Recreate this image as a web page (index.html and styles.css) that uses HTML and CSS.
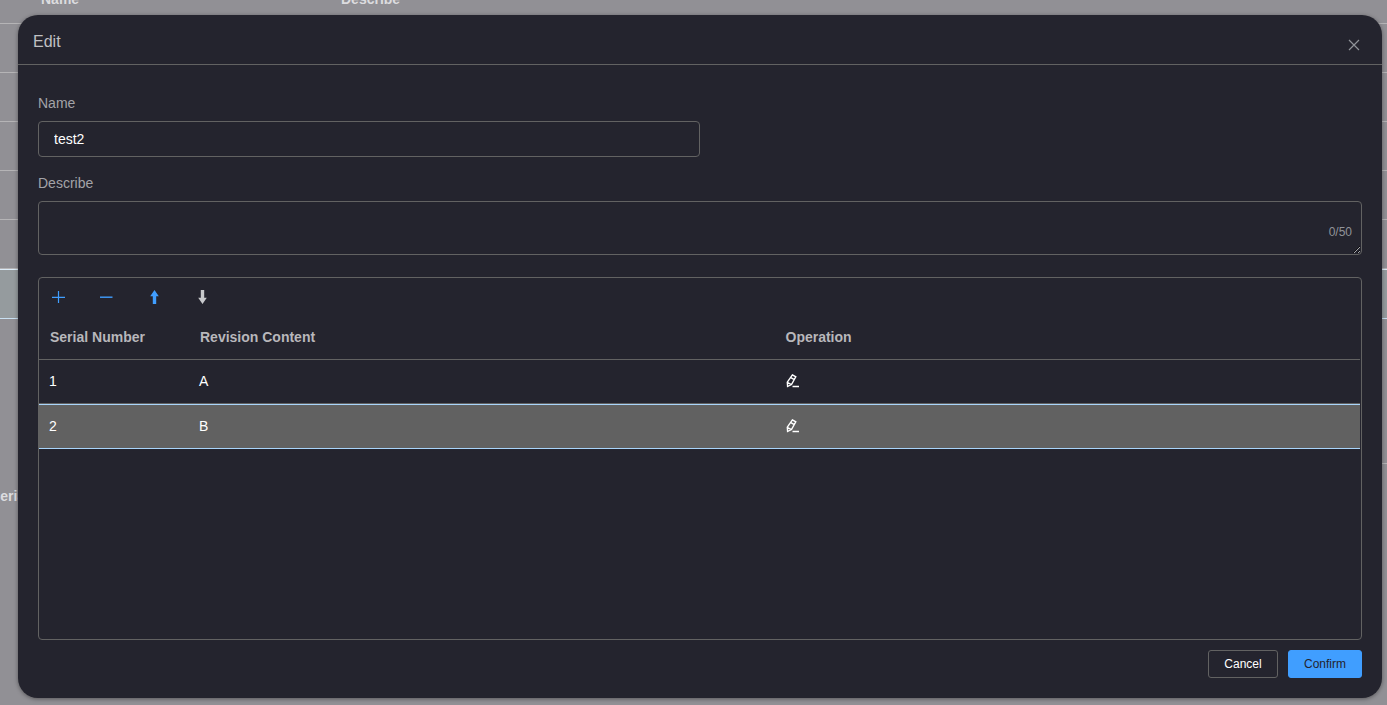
FILE: index.html
```html
<!DOCTYPE html>
<html lang="en">
<head>
<meta charset="utf-8">
<meta name="viewport" content="width=device-width, initial-scale=1">
<title>Edit</title>
<link rel="stylesheet" href="styles.css">
</head>
<body>
<div class="stage">
  <div class="page" aria-hidden="true">
    <div class="list">
      <div class="list-row list-head"><span>Name</span><span>Describe</span></div>
      <div class="list-row"></div>
      <div class="list-row"></div>
      <div class="list-row"></div>
      <div class="list-row"></div>
      <div class="list-row"></div>
      <div class="list-row list-row-active"></div>
    </div>
    <div class="detail"><span>Serial Number</span></div>
  </div>
  <form class="dialog" role="dialog" aria-labelledby="dialog-title">
    <header class="dialog-header">
      <h1 class="dialog-title" id="dialog-title">Edit</h1>
      <button class="close" type="button" aria-label="Close">
        <svg class="icon" viewBox="0 0 16 16" fill="none" stroke="currentColor" stroke-width="1.2"><path d="M3 3l10 10M13 3L3 13"/></svg>
      </button>
    </header>
    <div class="dialog-body">
      <div class="field">
        <label class="label" for="name">Name</label>
        <input class="input" id="name" type="text" value="test2">
      </div>
      <div class="field">
        <label class="label" for="describe">Describe</label>
        <div class="textarea-wrap">
          <textarea class="textarea" id="describe" maxlength="50"></textarea>
          <span class="count">0/50</span>
        </div>
      </div>
      <section class="panel">
        <div class="toolbar">
          <button class="tool" type="button" aria-label="Add"><svg class="icon" viewBox="0 0 16 16" fill="none" stroke="currentColor" stroke-width="1.2"><path d="M8.500 2v12M2 8.300h13"/></svg></button>
          <button class="tool" type="button" aria-label="Remove"><svg class="icon" viewBox="0 0 16 16" fill="none" stroke="currentColor" stroke-width="1.400"><path d="M2 8.200h12.500"/></svg></button>
          <button class="tool" type="button" aria-label="Move up"><svg class="icon" viewBox="0 0 16 16" fill="currentColor"><path d="M8.500 1l4.300 6.200h-2.600v7.800H6.800V7.200H4.200z"/></svg></button>
          <button class="tool tool-muted" type="button" aria-label="Move down"><svg class="icon" viewBox="0 0 16 16" fill="currentColor"><path d="M8.500 15l4.300-6.200h-2.600V1H6.800v7.800H4.200z"/></svg></button>
        </div>
        <table class="table">
          <colgroup><col class="col-serial"><col><col></colgroup>
          <thead><tr><th>Serial Number</th><th>Revision Content</th><th>Operation</th></tr></thead>
          <tbody>
            <tr><td>1</td><td>A</td><td><button class="edit" type="button" aria-label="Edit row 1"><svg class="icon" viewBox="0 0 16 16" fill="none" stroke="currentColor" stroke-width="1.4"><path d="M7.400 1.900l3.400 1.900-4.300 7.700-3.900 2-.3-4.400zM5.900 4.700l3.400 1.900M2.300 9.300l4 2.300M7.500 13.500h6.500"/></svg></button></td></tr>
            <tr class="selected"><td>2</td><td>B</td><td><button class="edit" type="button" aria-label="Edit row 2"><svg class="icon" viewBox="0 0 16 16" fill="none" stroke="currentColor" stroke-width="1.4"><path d="M7.400 1.900l3.400 1.900-4.300 7.700-3.900 2-.3-4.400zM5.900 4.700l3.400 1.900M2.300 9.300l4 2.300M7.500 13.500h6.500"/></svg></button></td></tr>
          </tbody>
        </table>
      </section>
      <footer class="actions">
        <button class="button" type="button">Cancel</button>
        <button class="button button-primary" type="submit">Confirm</button>
      </footer>
    </div>
  </form>
</div>
</body>
</html>
```

FILE: styles.css
```css
* { box-sizing: border-box; }

body {
  margin: 0;
  background: #919095;
  color: #fff;
  font: 14px/20px "Liberation Sans", Arial, sans-serif;
}

button, input, textarea { font: inherit; color: inherit; }

button {
  padding: 0;
  border: 0;
  background: none;
  cursor: pointer;
}

.icon { display: block; width: 16px; height: 16px; }

.stage {
  display: grid;
  min-height: 100vh;
  overflow: hidden;
}

.page, .dialog { grid-area: 1 / 1; min-width: 0; }

.page { color: #dcdcdf; font-weight: bold; }

.list { margin-top: -25px; }

.list-row {
  display: flex;
  align-items: center;
  height: 49px;
  padding-left: 41px;
  border-bottom: 1px solid #b5b4b6;
}

.list-head span { width: 300px; }

.list-row-active {
  height: 50px;
  border-top: 1px solid #dcebf7;
  border-bottom-color: #c9e0f2;
  background: #959b9e;
}

.detail {
  display: flex;
  align-items: flex-end;
  justify-content: space-between;
  height: 187px;
  margin-left: -9px;
}

.detail::after {
  content: "";
  width: 40px;
  height: 42px;
  border-top: 1px solid #b5b4b6;
}

.dialog {
  display: flex;
  flex-direction: column;
  margin: 15px 5px 7px 18px;
  border-radius: 20px;
  background: #24242e;
  box-shadow: 0 1px 4px rgba(0, 0, 0, .4);
}

.dialog-header {
  display: flex;
  align-items: center;
  justify-content: space-between;
  height: 50px;
  padding: 4px 20px 0 15px;
  border-bottom: 1px solid #626262;
}

.dialog-title {
  margin: 0;
  color: #c0c0c3;
  font-size: 16px;
  font-weight: normal;
}

.close { padding-top: 6px; color: #909399; }

.dialog-body {
  display: flex;
  flex: 1;
  flex-direction: column;
  padding: 28px 20px 20px;
}

.field {
  display: flex;
  flex-direction: column;
  gap: 8px;
  margin-bottom: 16px;
}

.label { align-self: flex-start; color: #a3a3a8; }

.input {
  width: 50%;
  height: 36px;
  padding: 0 15px;
  border: 1px solid #626262;
  border-radius: 4px;
  background: transparent;
  outline: 0;
}

.textarea-wrap { position: relative; }

.textarea {
  display: block;
  width: 100%;
  height: 54px;
  padding: 5px 15px;
  border: 1px solid #626262;
  border-radius: 4px;
  background: #24242e;
  color-scheme: dark;
  outline: 0;
  resize: vertical;
}

.count {
  position: absolute;
  right: 10px;
  bottom: 13px;
  color: #909399;
  font-size: 12px;
  pointer-events: none;
}

.panel {
  flex: 1;
  margin-top: 6px;
  padding-right: 1px;
  border: 1px solid #626262;
  border-radius: 4px;
}

.toolbar {
  display: flex;
  gap: 32px;
  padding: 11px 11px 10px;
  color: #409eff;
}

.tool-muted { color: #c8c9cc; }

.table {
  width: 100%;
  border-collapse: separate;
  border-spacing: 0;
  table-layout: fixed;
}

.col-serial { width: 150px; }

.table th, .table td {
  height: 44px;
  padding: 0 10px 2px;
  border-bottom: 1px solid #626262;
  text-align: left;
}

.table th {
  height: 45px;
  padding: 0 11px;
  color: #b8b7bb;
}

.table .selected td {
  height: 45px;
  border-top: 1px solid #a9d5fb;
  border-bottom-color: #a9d5fb;
  background: #616161;
}

.edit { display: block; }

.actions {
  display: flex;
  justify-content: flex-end;
  gap: 10px;
  margin-top: 10px;
}

.button {
  min-width: 70px;
  height: 28px;
  padding: 0 15px;
  border: 1px solid #626262;
  border-radius: 3px;
  font-size: 12px;
}

.button-primary {
  border-color: #409eff;
  background: #409eff;
  color: #24242e;
}
```
